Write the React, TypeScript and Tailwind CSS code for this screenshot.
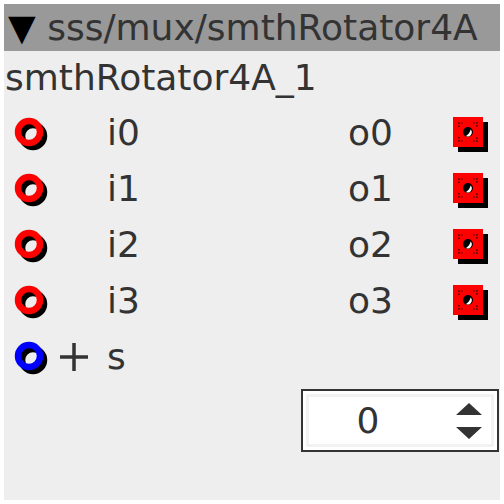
const font = { fontFamily: '"DejaVu Sans", sans-serif' };

function InPort({ color }: { color: string }) {
  return (
    <svg width="40" height="40" viewBox="0 0 40 40" className="shrink-0">
      <circle cx="23" cy="23" r="11" fill="none" stroke="#000" strokeWidth="6.5" />
      <circle cx="19" cy="19" r="11" fill="none" stroke={color} strokeWidth="6.5" />
    </svg>
  );
}

function OutPort() {
  return (
    <svg width="40" height="40" viewBox="0 0 40 40" className="shrink-0">
      <rect x="9" y="9" width="30" height="30" fill="#000" />
      <rect x="4" y="4" width="30" height="30" fill="#ff0000" />
      <g fill="none" stroke="#000" strokeWidth="1.2" strokeDasharray="1.5 1.5">
        <path d="M10 14 V10 H14" />
        <path d="M24 10 H28 V14" />
        <path d="M10 24 V28 H14" />
        <path d="M24 28 H28 V24" />
      </g>
      <circle cx="19" cy="19" r="5" fill="#000" />
      <path d="M21.5 16.5 A4 4 0 0 1 17 23 Q21 20 21.5 16.5 Z" fill="#fff" />
    </svg>
  );
}

const rows = ["0", "1", "2", "3"];

export default function App() {
  return (
    <div className="h-[504px] w-[504px] bg-white p-1" style={font}>
      <div className="h-[496px] w-[496px] bg-[#eeeeee] text-[#333333]">
        <div className="flex h-[47px] items-center whitespace-pre bg-[#999999] pl-1 text-[36px] leading-none">
          <span className="text-black">▼</span>
          <span> sss/mux/smthRotator4A</span>
        </div>
        <div className="flex h-[54px] items-center pl-px text-[36px] leading-none">smthRotator4A_1</div>
        {rows.map((n) => (
          <div key={n} className="flex h-[56px] items-center text-[36px] leading-none">
            <div className="w-[103px] pl-[6px]">
              <InPort color="#ff0000" />
            </div>
            <span className="w-[241px]">i{n}</span>
            <span className="w-[101px]">o{n}</span>
            <OutPort />
          </div>
        ))}
        <div className="flex h-[56px] items-center text-[36px] leading-none">
          <div className="flex w-[103px] items-center pl-[6px]">
            <InPort color="#0000ff" />
            <svg width="34" height="34" viewBox="0 0 34 34" className="ml-[8px]">
              <path d="M2 17 H30 M16 3 V31" stroke="#333" strokeWidth="3.5" />
            </svg>
          </div>
          <span>s</span>
        </div>
        <div className="ml-[297px] mt-1 flex h-[63px] w-[198px] border-2 border-[#333333] bg-white p-[3px]">
          <div className="flex flex-1 items-center bg-white ring-[3px] ring-[#f2f2f2] ring-inset">
            <span className="w-[124px] text-center text-[36px] leading-none">0</span>
            <svg width="30" height="40" viewBox="0 0 30 40" className="ml-[24px]">
              <path d="M2 14 L15 2 L28 14 Z M2 26 L28 26 L15 38 Z" fill="#333" />
            </svg>
          </div>
        </div>
      </div>
    </div>
  );
}
